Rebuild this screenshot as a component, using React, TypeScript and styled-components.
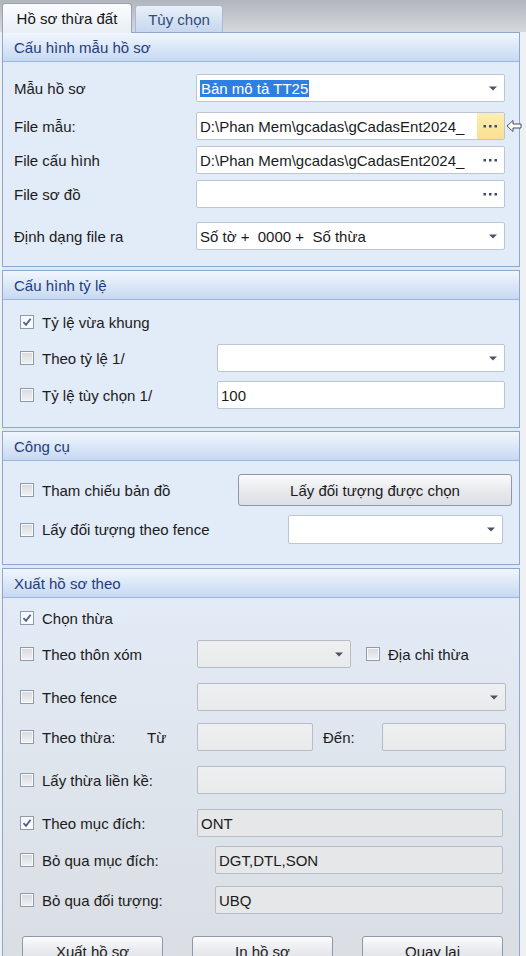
import React from 'react';
import styled, { createGlobalStyle } from 'styled-components';

const GlobalStyle = createGlobalStyle`
    html, body {
        margin: 0;
        padding: 0;
        overflow: hidden;
        background: #eef0f3;
    }
    body {
        font-family: "Liberation Sans", Arial, sans-serif;
        font-size: 15px;
        color: #1b1b1b;
    }
`;

const Janela = styled.div`
    position: relative;
    width: 526px;
    height: 956px;
    overflow: hidden;
    background: #eef0f3;
`;

const BarraAbas = styled.div`
    display: flex;
    align-items: flex-end;
    gap: 3px;
    height: 32px;
    padding-left: 2px;
    background: linear-gradient(#b1b5bc, #d6d9de);
`;

const Aba = styled.div<{ ativa?: boolean }>`
    display: flex;
    align-items: center;
    justify-content: center;
    box-sizing: border-box;
    height: ${({ ativa }) => (ativa ? '30px' : '27px')};
    width: ${({ ativa }) => (ativa ? '130px' : '88px')};
    margin-bottom: ${({ ativa }) => (ativa ? '-1px' : '0')};
    border: 1px solid ${({ ativa }) => (ativa ? '#98a3b3' : '#a9b9d1')};
    border-bottom: none;
    border-radius: 3px 3px 0 0;
    background: ${({ ativa }) =>
        ativa ? 'linear-gradient(#fbfcfe, #e9eef6)' : 'linear-gradient(#e8eff9, #c7d7ee)'};
    color: ${({ ativa }) => (ativa ? '#151515' : '#2f4c7c')};
    font-size: 15px;
    position: relative;
    z-index: 1;
`;

const Painel = styled.div`
    display: flex;
    flex-direction: column;
    gap: 3px;
    width: 518px;
    margin-left: 2px;
    background: #dfe8f5;
`;

const Secao = styled.div<{ fundo?: string }>`
    border: 1px solid #8ea8cd;
    background: ${({ fundo }) => fundo || '#e2ebf8'};
`;

const CabecalhoSecao = styled.div`
    height: 28px;
    display: flex;
    align-items: center;
    padding-left: 11px;
    background: linear-gradient(#f1f6fd, #c6d9f2);
    border-bottom: 1px solid #9db6dc;
    color: #1f3d7c;
    font-size: 15px;
`;

const CorpoSecao = styled.div<{ baixo: number }>`
    display: flex;
    flex-direction: column;
    padding-bottom: ${({ baixo }) => baixo}px;
`;

const Linha = styled.div<{ topo: number; altura?: number; esq?: number; dir?: number }>`
    display: flex;
    align-items: center;
    height: ${({ altura }) => altura || 28}px;
    margin-top: ${({ topo }) => topo}px;
    padding-left: ${({ esq }) => (esq === undefined ? 11 : esq)}px;
    padding-right: ${({ dir }) => (dir === undefined ? 14 : dir)}px;
`;

const Rotulo = styled.div<{ largura: number }>`
    width: ${({ largura }) => largura}px;
    flex-shrink: 0;
    white-space: nowrap;
`;

const RotuloCheck = styled.label<{ largura?: number; recuo?: number }>`
    display: flex;
    align-items: center;
    gap: 8px;
    box-sizing: border-box;
    width: ${({ largura }) => (largura ? `${largura}px` : 'auto')};
    flex-shrink: 0;
    white-space: nowrap;
    padding-left: ${({ recuo }) => (recuo === undefined ? 6 : recuo)}px;
`;

const Caixa = styled.span<{ marcada?: boolean }>`
    display: inline-flex;
    align-items: center;
    justify-content: center;
    box-sizing: border-box;
    width: 14px;
    height: 14px;
    border: 1px solid #8f9aab;
    background: ${({ marcada }) =>
        marcada ? 'linear-gradient(#f4f6f9, #ffffff)' : 'linear-gradient(#d7d9dd, #f1f2f4)'};
    box-shadow: inset 0 0 0 1px #f8f9fb;
`;

const Campo = styled.div<{ largura?: number; desativado?: boolean; cinza?: boolean }>`
    display: flex;
    align-items: center;
    box-sizing: border-box;
    height: 100%;
    ${({ largura }) => (largura ? `width: ${largura}px; flex-shrink: 0;` : 'flex: 1;')}
    border: 1px solid ${({ desativado }) => (desativado ? '#b7bdc6' : '#bcc6d3')};
    border-radius: 2px;
    background: ${({ desativado, cinza }) =>
        cinza ? '#e6e7e9' : desativado ? 'linear-gradient(#eeeff1, #e9eaec)' : '#ffffff'};
    padding-left: 3px;
    overflow: hidden;
    white-space: nowrap;
`;

const TextoCampo = styled.span`
    flex: 1;
    overflow: hidden;
    white-space: nowrap;
`;

const Selecionado = styled.span`
    background: #2f7fe0;
    color: #ffffff;
    padding: 1px 1px;
`;

const BotaoSeta = styled.span`
    width: 22px;
    display: flex;
    align-items: center;
    justify-content: center;
    flex-shrink: 0;
`;

const BotaoPontos = styled.span<{ quente?: boolean }>`
    width: 27px;
    height: 100%;
    display: flex;
    align-items: center;
    justify-content: center;
    flex-shrink: 0;
    background: ${({ quente }) => (quente ? 'linear-gradient(#fdeeb4, #fbe08e)' : 'transparent')};
`;

const Botao = styled.div<{ largura: number; altura?: number }>`
    display: flex;
    align-items: center;
    justify-content: center;
    box-sizing: border-box;
    width: ${({ largura }) => largura}px;
    height: ${({ altura }) => altura || 32}px;
    flex-shrink: 0;
    border: 1px solid #8e98a6;
    border-radius: 3px;
    background: linear-gradient(#fbfbfc, #e8eaee 50%, #dcdfe4);
    font-size: 15px;
`;

const Texto = styled.span<{ esq?: number; largura?: number }>`
    margin-left: ${({ esq }) => esq || 0}px;
    ${({ largura }) => (largura ? `width: ${largura}px;` : '')}
    flex-shrink: 0;
    white-space: nowrap;
`;

const LinhaBotoes = styled.div`
    display: flex;
    justify-content: space-between;
    margin-top: 22px;
    padding: 0 16px 0 19px;
`;

const Cursor = styled.svg`
    position: absolute;
    left: 506px;
    top: 118px;
`;

const Seta = () => (
    <svg width="8" height="5" viewBox="0 0 8 5">
        <path d="M0 0.5 H8 L4 4.5 Z" fill="#4b5262" />
    </svg>
);

const Pontos = () => (
    <svg width="15" height="4" viewBox="0 0 15 4">
        <rect x="0.5" y="1" width="2.5" height="2.5" fill="#3e4b68" />
        <rect x="6" y="1" width="2.5" height="2.5" fill="#3e4b68" />
        <rect x="11.5" y="1" width="2.5" height="2.5" fill="#3e4b68" />
    </svg>
);

const Check: React.FC<{ marcada?: boolean }> = ({ marcada }) => (
    <Caixa marcada={marcada}>
        {marcada && (
            <svg width="10" height="10" viewBox="0 0 10 10">
                <path d="M1.5 5.2 L4 7.8 L8.6 1.8" stroke="#4c5f8f" strokeWidth="1.8" fill="none" />
            </svg>
        )}
    </Caixa>
);

const App: React.FC = () => {
    return (
        <Janela>
            <GlobalStyle />
            <BarraAbas>
                <Aba ativa>Hồ sơ thừa đất</Aba>
                <Aba>Tùy chọn</Aba>
            </BarraAbas>

            <Painel>
                <Secao>
                    <CabecalhoSecao>Cấu hình mẫu hồ sơ</CabecalhoSecao>
                    <CorpoSecao baixo={16}>
                        <Linha topo={12}>
                            <Rotulo largura={182}>Mẫu hồ sơ</Rotulo>
                            <Campo>
                                <TextoCampo><Selecionado>Bản mô tả TT25</Selecionado></TextoCampo>
                                <BotaoSeta><Seta /></BotaoSeta>
                            </Campo>
                        </Linha>
                        <Linha topo={10}>
                            <Rotulo largura={182}>File mẫu:</Rotulo>
                            <Campo>
                                <TextoCampo>D:\Phan Mem\gcadas\gCadasEnt2024_</TextoCampo>
                                <BotaoPontos quente><Pontos /></BotaoPontos>
                            </Campo>
                        </Linha>
                        <Linha topo={6}>
                            <Rotulo largura={182}>File cấu hình</Rotulo>
                            <Campo>
                                <TextoCampo>D:\Phan Mem\gcadas\gCadasEnt2024_</TextoCampo>
                                <BotaoPontos><Pontos /></BotaoPontos>
                            </Campo>
                        </Linha>
                        <Linha topo={6}>
                            <Rotulo largura={182}>File sơ đồ</Rotulo>
                            <Campo>
                                <TextoCampo></TextoCampo>
                                <BotaoPontos><Pontos /></BotaoPontos>
                            </Campo>
                        </Linha>
                        <Linha topo={14}>
                            <Rotulo largura={182}>Định dạng file ra</Rotulo>
                            <Campo>
                                <TextoCampo>Số tờ +&nbsp; 0000 +&nbsp; Số thừa</TextoCampo>
                                <BotaoSeta><Seta /></BotaoSeta>
                            </Campo>
                        </Linha>
                    </CorpoSecao>
                </Secao>

                <Secao>
                    <CabecalhoSecao>Cấu hình tỷ lệ</CabecalhoSecao>
                    <CorpoSecao baixo={18}>
                        <Linha topo={8}>
                            <RotuloCheck><Check marcada />Tỷ lệ vừa khung</RotuloCheck>
                        </Linha>
                        <Linha topo={8}>
                            <RotuloCheck largura={203}><Check />Theo tỷ lệ 1/</RotuloCheck>
                            <Campo>
                                <TextoCampo></TextoCampo>
                                <BotaoSeta><Seta /></BotaoSeta>
                            </Campo>
                        </Linha>
                        <Linha topo={9}>
                            <RotuloCheck largura={203}><Check />Tỷ lệ tùy chọn 1/</RotuloCheck>
                            <Campo>
                                <TextoCampo>100</TextoCampo>
                            </Campo>
                        </Linha>
                    </CorpoSecao>
                </Secao>

                <Secao>
                    <CabecalhoSecao>Công cụ</CabecalhoSecao>
                    <CorpoSecao baixo={20}>
                        <Linha topo={13} altura={32} dir={7}>
                            <RotuloCheck largura={224}><Check />Tham chiếu bản đồ</RotuloCheck>
                            <Botao largura={274}>Lấy đối tượng được chọn</Botao>
                        </Linha>
                        <Linha topo={9} altura={29}>
                            <RotuloCheck largura={274}><Check />Lấy đối tượng theo fence</RotuloCheck>
                            <Campo largura={215}>
                                <TextoCampo></TextoCampo>
                                <BotaoSeta><Seta /></BotaoSeta>
                            </Campo>
                        </Linha>
                    </CorpoSecao>
                </Secao>

                <Secao fundo="linear-gradient(#e3ecf8, #dde3ea 60%, #dadee3)">
                    <CabecalhoSecao>Xuất hồ sơ theo</CabecalhoSecao>
                    <CorpoSecao baixo={20}>
                        <Linha topo={6}>
                            <RotuloCheck><Check marcada />Chọn thừa</RotuloCheck>
                        </Linha>
                        <Linha topo={8}>
                            <RotuloCheck largura={183}><Check />Theo thôn xóm</RotuloCheck>
                            <Campo largura={154} desativado>
                                <TextoCampo></TextoCampo>
                                <BotaoSeta><Seta /></BotaoSeta>
                            </Campo>
                            <RotuloCheck recuo={15}><Check />Địa chỉ thừa</RotuloCheck>
                        </Linha>
                        <Linha topo={15} dir={13}>
                            <RotuloCheck largura={183}><Check />Theo fence</RotuloCheck>
                            <Campo desativado>
                                <TextoCampo></TextoCampo>
                                <BotaoSeta><Seta /></BotaoSeta>
                            </Campo>
                        </Linha>
                        <Linha topo={12} dir={13}>
                            <RotuloCheck largura={133}><Check />Theo thừa:</RotuloCheck>
                            <Texto largura={50}>Từ</Texto>
                            <Campo largura={116} desativado />
                            <Texto esq={10} largura={59}>Đến:</Texto>
                            <Campo desativado />
                        </Linha>
                        <Linha topo={15} dir={13}>
                            <RotuloCheck largura={183}><Check />Lấy thừa liền kề:</RotuloCheck>
                            <Campo desativado />
                        </Linha>
                        <Linha topo={15} dir={16}>
                            <RotuloCheck largura={183}><Check marcada />Theo mục đích:</RotuloCheck>
                            <Campo cinza desativado><TextoCampo>ONT</TextoCampo></Campo>
                        </Linha>
                        <Linha topo={9} dir={16}>
                            <RotuloCheck largura={201}><Check />Bỏ qua mục đích:</RotuloCheck>
                            <Campo cinza desativado><TextoCampo>DGT,DTL,SON</TextoCampo></Campo>
                        </Linha>
                        <Linha topo={12} dir={16}>
                            <RotuloCheck largura={201}><Check />Bỏ qua đối tượng:</RotuloCheck>
                            <Campo cinza desativado><TextoCampo>UBQ</TextoCampo></Campo>
                        </Linha>
                        <LinhaBotoes>
                            <Botao largura={141} altura={30}>Xuất hồ sơ</Botao>
                            <Botao largura={141} altura={30}>In hồ sơ</Botao>
                            <Botao largura={141} altura={30}>Quay lại</Botao>
                        </LinhaBotoes>
                    </CorpoSecao>
                </Secao>
            </Painel>

            <Cursor width="16" height="16" viewBox="0 0 16 16">
                <path d="M1 8 L7 2.5 V6 H15 V10 H7 V13.5 Z" fill="#ffffff" stroke="#4a4f58" strokeWidth="1" />
            </Cursor>
        </Janela>
    );
};

export default App;
